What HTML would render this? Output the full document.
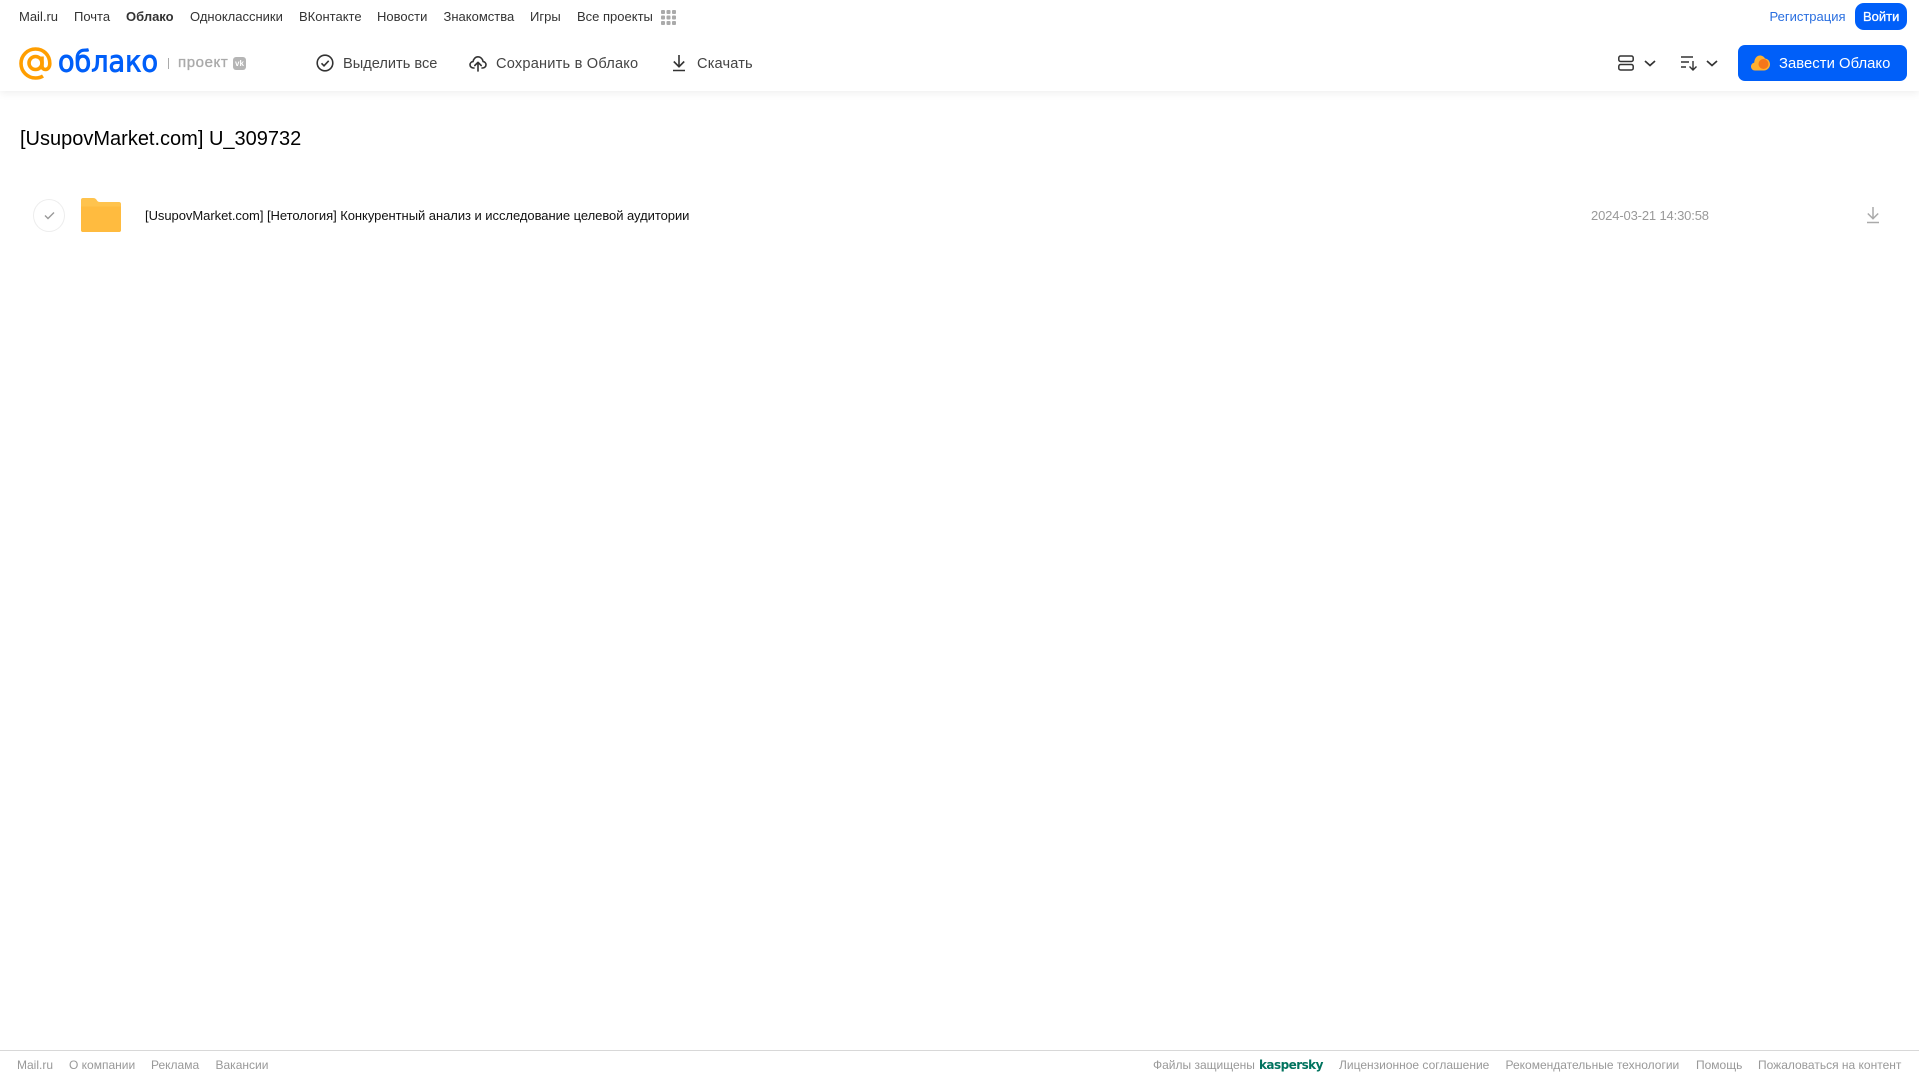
<!DOCTYPE html>
<html lang="ru"><head><meta charset="utf-8"><title>Облако</title>
<style>
html,body{margin:0;padding:0;background:#fff;width:1919px;height:1079px;overflow:hidden;font-family:"Liberation Sans",Arial,sans-serif}
.t{position:absolute;white-space:nowrap;line-height:18px}
.n{font-size:13px;top:8px;color:#333}
.b{font-size:14.600px;top:55px;color:#444}
.f{font-size:12px;top:1056px;color:#999}
svg{position:absolute;overflow:visible}
</style></head><body>
<div style="position:absolute;left:0;top:0;width:1919px;height:91px;background:#fff;box-shadow:0 2px 8px rgba(0,0,0,.07)"></div>

<span class="t n" style="left:19px">Mail.ru</span>
<span class="t n" style="left:74px">Почта</span>
<span class="t n" style="left:126px;font-weight:bold">Облако</span>
<span class="t n" style="left:190px">Одноклассники</span>
<span class="t n" style="left:299px">ВКонтакте</span>
<span class="t n" style="left:377px">Новости</span>
<span class="t n" style="left:443.500px">Знакомства</span>
<span class="t n" style="left:530px">Игры</span>
<span class="t n" style="left:577px">Все проекты</span>
<svg style="left:661px;top:10px" width="15" height="15" fill="#aaa"><rect width="4" height="4" rx="1"/><rect x="5.500" width="4" height="4" rx="1"/><rect x="11" width="4" height="4" rx="1"/><rect y="5.500" width="4" height="4" rx="1"/><rect x="5.500" y="5.500" width="4" height="4" rx="1"/><rect x="11" y="5.500" width="4" height="4" rx="1"/><rect y="11" width="4" height="4" rx="1"/><rect x="5.500" y="11" width="4" height="4" rx="1"/><rect x="11" y="11" width="4" height="4" rx="1"/></svg>

<span class="t n" style="left:1769.500px;color:#2a6fe0">Регистрация</span>
<div style="position:absolute;left:1855px;top:3px;width:52px;height:27px;background:#005ff9;border-radius:9px"></div>
<span class="t n" style="left:1863px;color:#fff;-webkit-text-stroke:.3px #fff">Войти</span>

<svg style="left:19px;top:47px" width="33" height="33" viewBox="0 0 33 33" fill="none" stroke="#ff9e00" stroke-width="3.600"><circle cx="16.500" cy="16" r="6.500"/><path d="M23 9.500v9.500c0 5 7.800 5 7.800-2.500C30.800 8 24.500 2 16.500 2 8.500 2 2 8.500 2 16.500S8.500 31 16.500 31c3 0 5.500-.7 7.500-2"/></svg>
<svg style="left:56px;top:42px" width="106" height="38"><text x="2" y="29.500" font-family="'DejaVu Sans',sans-serif" font-size="29" fill="#005ff9" stroke="#005ff9" stroke-width=".9" textLength="100" lengthAdjust="spacingAndGlyphs">облако</text></svg>
<div style="position:absolute;left:168px;top:58px;width:1px;height:11px;background:#aaa"></div>
<span class="t" style="left:178px;top:54px;font-size:15px;letter-spacing:.6px;color:#aaa;-webkit-text-stroke:.35px #aaa">проект</span>
<div style="position:absolute;left:233px;top:57px;width:13px;height:13px;background:#b5b5b5;border-radius:3px;color:#fff;font-size:8px;font-weight:bold;line-height:13px;text-align:center">vk</div>

<svg style="left:316px;top:54px" width="18" height="18" viewBox="0 0 18 18" fill="none" stroke="#333" stroke-width="1.600"><circle cx="9" cy="9" r="7.800"/><path d="M5.500 9.300l2.500 2.500 4.700-5"/></svg>
<span class="t b" style="left:343px">Выделить все</span>
<svg style="left:469px;top:54px" width="18" height="18" viewBox="0 0 18 18" fill="none" stroke="#333" stroke-width="1.600" stroke-linecap="round" stroke-linejoin="round"><path d="M5 14H4.500C2.500 14 1 12.600 1 10.800c0-1.700 1.300-3 3-3.200C4.500 5 6.500 2.800 9 2.800s4.700 2 5.100 4.800c1.700.2 2.900 1.500 2.900 3.200 0 1.800-1.500 3.200-3.500 3.200H13"/><path d="M9 17V8.500M5.800 11.500L9 8.300l3.200 3.200"/></svg>
<span class="t b" style="left:496px;letter-spacing:.2px">Сохранить в Облако</span>
<svg style="left:672px;top:54px" width="14" height="18" viewBox="0 0 14 18" fill="none" stroke="#333" stroke-width="1.600"><path d="M7 1v11.500M1.800 7.500L7 12.700l5.200-5.200M1 16.500h12"/></svg>
<span class="t b" style="left:697px;letter-spacing:.15px">Скачать</span>

<svg style="left:1618px;top:55px" width="16" height="16" viewBox="0 0 16 16" fill="none" stroke="#333" stroke-width="1.500"><rect x=".8" y="1" width="14.400" height="5.500" rx="1.800"/><rect x=".8" y="9.500" width="14.400" height="5.500" rx="1.800"/></svg>
<svg style="left:1644px;top:60px" width="12" height="7" fill="none" stroke="#333" stroke-width="1.700"><path d="M1 1l5 4.500L11 1"/></svg>
<svg style="left:1681px;top:55px" width="16" height="16" viewBox="0 0 16 16" fill="none" stroke="#333" stroke-width="1.400"><path d="M0 2h12M0 7h8M0 12h5M12 6v9M8.500 11.500L12 15l3.500-3.500"/></svg>
<svg style="left:1706px;top:60px" width="12" height="7" fill="none" stroke="#333" stroke-width="1.700"><path d="M1 1l5 4.500L11 1"/></svg>

<div style="position:absolute;left:1738px;top:45px;width:169px;height:36px;background:#005ff9;border-radius:7px"></div>
<svg style="left:1751px;top:55px" width="19" height="16" viewBox="0 0 19 16"><path d="M4 15.500C1.800 15.500 0 13.800 0 11.500c0-2 1.400-3.500 3.200-3.900C3.500 3.500 5.800.5 9 .5c2.200 0 4 1.200 5 3 2.800.3 5 2.600 5 5.800 0 3.500-2.800 6.200-6 6.200z" fill="#ffb02e"/><circle cx="12.500" cy="9" r="5" fill="#f5761a"/></svg>
<span class="t" style="left:1779px;top:55px;font-size:14.800px;letter-spacing:.05px;color:#fff">Завести Облако</span>

<span class="t" style="left:20px;top:125px;font-size:20px;line-height:28px;color:#000">[UsupovMarket.com] U_309732</span>

<div style="position:absolute;left:33px;top:199px;width:30px;height:31px;border:1px solid #ededed;border-radius:50%"></div>
<svg style="left:43.500px;top:211px" width="11" height="9" fill="none" stroke="#999" stroke-width="1.400"><path d="M1 4.500l3 3 6-6"/></svg>
<svg style="left:81px;top:198px" width="40" height="34" viewBox="0 0 40 34"><path d="M2 0h10c2 0 3 .8 4 2.500 .6 1 1.400 1.500 3 1.500h19c1.200 0 2 .8 2 2v26c0 1.200-.8 2-2 2H2c-1.200 0-2-.8-2-2V2C0 .8.800 0 2 0z" fill="#ffc34d"/><path d="M0 8.500h40V32c0 1.200-.8 2-2 2H2c-1.200 0-2-.8-2-2z" fill="#ffbb3f"/></svg>
<span class="t" style="left:145px;top:207px;font-size:13px;letter-spacing:-.045px;color:#111">[UsupovMarket.com] [Нетология] Конкурентный анализ и исследование целевой аудитории</span>
<span class="t" style="left:1591px;top:207px;font-size:13px;letter-spacing:-.15px;color:#999">2024-03-21 14:30:58</span>
<svg style="left:1866px;top:206px" width="14" height="18" viewBox="0 0 14 18" fill="none" stroke="#aaa" stroke-width="1.500"><path d="M7 1v11.500M1.800 7.500L7 12.700l5.200-5.200M1 16.500h12"/></svg>

<div style="position:absolute;left:0;top:1050px;width:1919px;height:1px;background:#d8d8d8"></div>
<span class="t f" style="left:17px">Mail.ru</span>
<span class="t f" style="left:69px">О компании</span>
<span class="t f" style="left:151px">Реклама</span>
<span class="t f" style="left:215.500px">Вакансии</span>
<span class="t f" style="left:1153px">Файлы защищены</span>
<span class="t f" style="left:1259px;top:1056px;color:#00735e;font-weight:bold;font-size:12px;font-family:'DejaVu Sans',sans-serif;letter-spacing:-.55px">kaspersky</span>
<span class="t f" style="left:1339px">Лицензионное соглашение</span>
<span class="t f" style="left:1505.500px">Рекомендательные технологии</span>
<span class="t f" style="left:1696px">Помощь</span>
<span class="t f" style="left:1758px">Пожаловаться на контент</span>
</body></html>
